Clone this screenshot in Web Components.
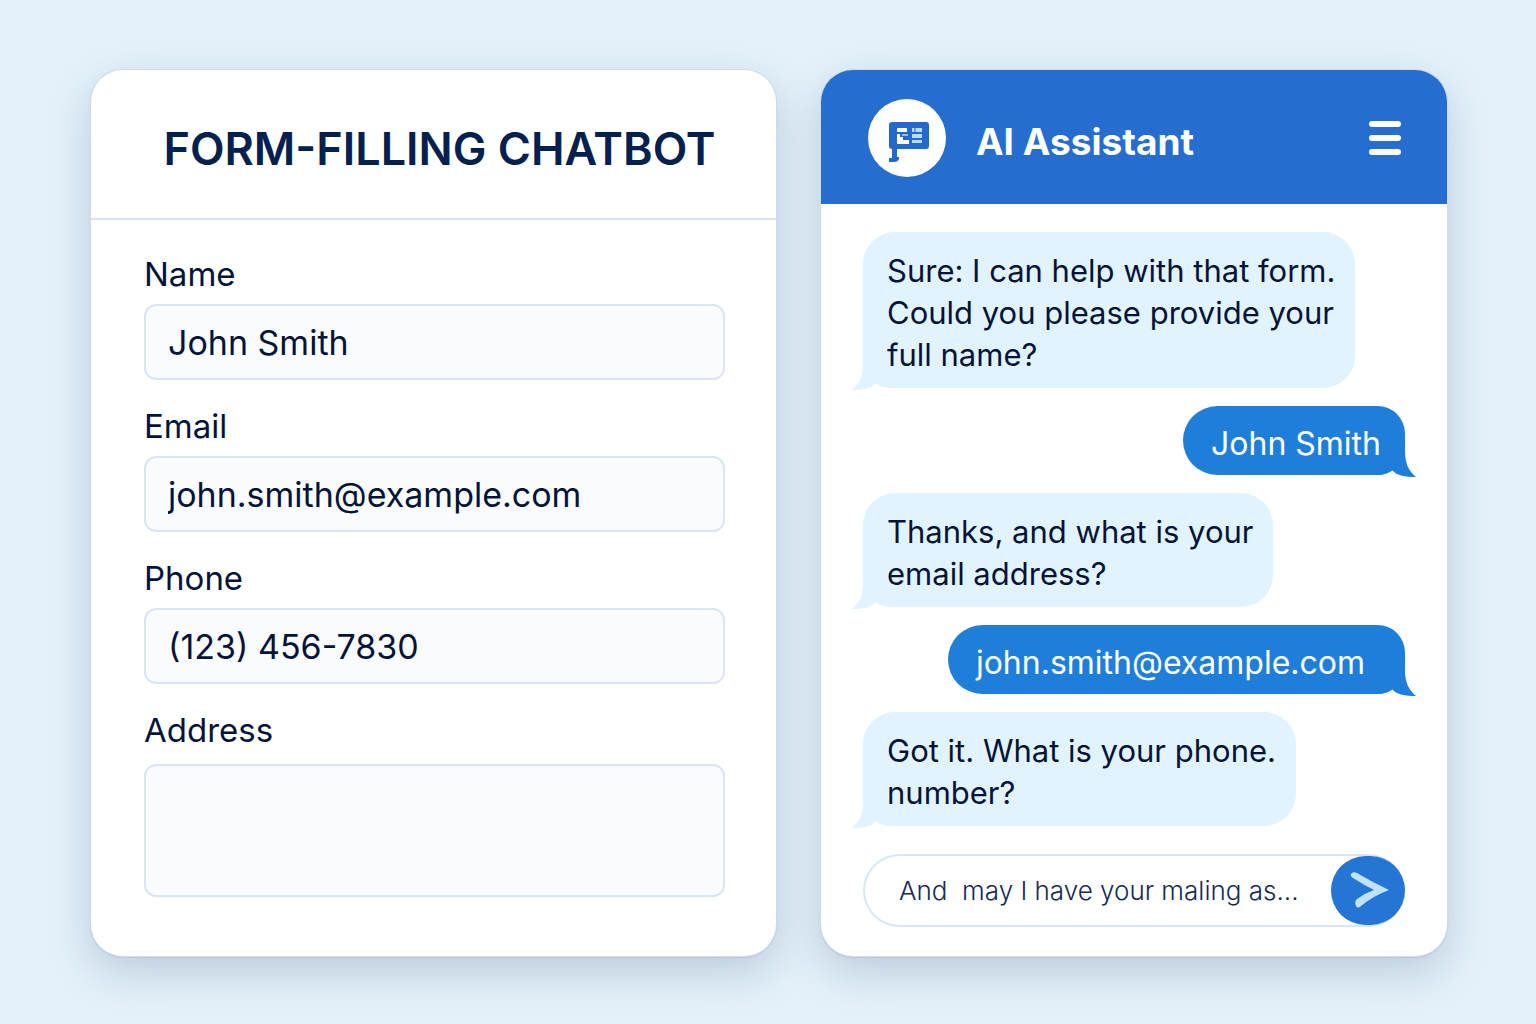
<!DOCTYPE html>
<html lang="en">
<head>
<meta charset="utf-8">
<meta name="viewport" content="width=device-width, initial-scale=1">
<title>Form-Filling Chatbot</title>
<style>
html, body { margin: 0; min-height: 100%; }
body { background: #e4f1fa; color: #051338; font-family: Inter, "Liberation Sans", sans-serif; }
</style>
</head>
<body>
<chatbot-page>
  <form-card heading="FORM-FILLING CHATBOT">
    <form-field label="Name" value="John Smith"></form-field>
    <form-field label="Email" type="email" value="john.smith@example.com"></form-field>
    <form-field label="Phone" type="tel" value="(123) 456-7830"></form-field>
    <form-field label="Address" multiline></form-field>
  </form-card>
  <chat-card heading="AI Assistant">
    <chat-message>Sure: I can help with that form.<br>Could you please provide your<br>full name?</chat-message>
    <chat-message from="user">John Smith</chat-message>
    <chat-message>Thanks, and what is your<br>email address?</chat-message>
    <chat-message from="user" roomy>john.smith@example.com</chat-message>
    <chat-message>Got it. What is your phone.<br>number?</chat-message>
    <chat-composer slot="composer" value="And  may I have your maling as..."></chat-composer>
  </chat-card>
</chatbot-page>
<script>
class BaseElement extends HTMLElement {
  connectedCallback() {
    if (!this.shadowRoot) this.attachShadow({ mode: "open" }).innerHTML = this.render();
  }
  attr(name, fallback = "") { return this.getAttribute(name) || fallback; }
}

customElements.define("chatbot-page", class extends BaseElement {
  render() {
    return `<style>
      :host { display: block; }
      main { display: flex; gap: 45px; align-items: stretch; box-sizing: border-box; min-height: 100vh; padding: 70px 89px 68px 91px; }
      ::slotted(*) { box-sizing: border-box; min-width: 0; border-radius: 32px; background: #fff;
        box-shadow: 0 0 0 1px #cddced, 0 1px 1px 1px #b9c9de, 0 16px 44px rgba(80, 105, 140, .28); }
      ::slotted(form-card) { flex: 685 1 0; }
      ::slotted(chat-card) { flex: 626 1 0; }
    </style><main><slot></slot></main>`;
  }
});

customElements.define("form-card", class extends BaseElement {
  render() {
    return `<style>
      :host { display: block; }
      header { display: flex; align-items: center; justify-content: center; box-sizing: border-box; height: 150px;
        padding: 10px 0 0 12px; border-bottom: 2px solid #dbe5f1; }
      h1 { margin: 0; font-size: 45px; line-height: 56px; font-weight: 600; color: #04204f; white-space: nowrap; }
      form { display: flex; flex-direction: column; gap: 24px; padding: 32px 51px 0 53px; }
    </style>
    <header><h1>${this.attr("heading")}</h1></header>
    <form><slot></slot></form>`;
  }
});

customElements.define("form-field", class extends BaseElement {
  render() {
    const control = this.hasAttribute("multiline")
      ? `<textarea id="control"></textarea>`
      : `<input id="control" type="${this.attr("type", "text")}" value="${this.attr("value")}">`;
    return `<style>
      :host { display: block; }
      label { display: block; margin-bottom: 8px; font-size: 33px; line-height: 44px; }
      input, textarea { display: block; box-sizing: border-box; width: 100%; height: 76px; margin: 0; padding: 0 22px;
        border: 2px solid #dbe5f2; border-radius: 12px; background: #fafbfe; color: inherit;
        font: inherit; font-size: 34px; outline: none; resize: none; }
      textarea { height: 133px; margin-top: 12px; padding: 16px 22px; }
    </style>
    <label for="control">${this.attr("label")}</label>${control}`;
  }
});

customElements.define("chat-card", class extends BaseElement {
  render() {
    return `<style>
      :host { display: flex; flex-direction: column; }
      header { display: flex; align-items: center; box-sizing: border-box; height: 134px; padding: 2px 46px 0 47px;
        border-radius: 32px 32px 0 0; background: #256dce; color: #fff; }
      .avatar { flex: none; width: 78px; height: 78px; }
      h2 { flex: 1; margin: 0 0 0 30px; padding-top: 8px; font-size: 37px; line-height: 46px; font-weight: 700; white-space: nowrap; }
      button { display: block; padding: 0; border: 0; background: none; cursor: pointer; }
      button svg { display: block; }
      .log { display: flex; flex-direction: column; gap: 18px; padding: 28px 42px; }
      .composer { padding: 0 42px 29px; }
    </style>
    <header>
      <svg class="avatar" viewBox="0 0 78 78" aria-hidden="true">
        <circle cx="39" cy="39" r="39" fill="#fff"/>
        <path d="M24 23H58Q61 23 61 26V47Q61 50 58 50H29V58H31V60Q30 63 26 63H21V59H24V50Q21 50 21 47V26Q21 23 24 23Z" fill="#246acb"/>
        <path d="M29 29H39V33H29Z" fill="#fff"/>
        <path d="M29 35H32V38H35V41H41V45H29Z" fill="#fff"/>
        <path d="M34 35H40V37H34Z" fill="#8dbcf0"/>
        <path d="M44 29H54V33H44ZM44 35H54V39H44ZM44 41H54V44H44Z" fill="#b7dcfa"/>
        <path d="M47 29V33" stroke="#246acb"/>
      </svg>
      <h2>${this.attr("heading")}</h2>
      <button type="button" aria-label="Menu">
        <svg width="32" height="34" viewBox="0 0 32 34" fill="#fff"><rect width="32" height="6" rx="3"/><rect y="14" width="32" height="6" rx="3"/><rect y="28" width="32" height="6" rx="3"/></svg>
      </button>
    </header>
    <div class="log"><slot></slot></div>
    <div class="composer"><slot name="composer"></slot></div>`;
  }
});

customElements.define("chat-message", class extends BaseElement {
  render() {
    return `<style>
      :host { display: block; position: relative; isolation: isolate; align-self: flex-start; padding: 18px 20px 12px 24px;
        border-radius: 32px 32px 32px 28px; background: #e1f3fe; font-size: 31px; line-height: 42px; white-space: nowrap; }
      :host([from="user"]) { align-self: flex-end; padding: 17px 24px 10px 28px; border-radius: 35px 28px 28px 35px;
        background: #207edb; color: #fff; font-size: 32px; }
      :host([roomy]) { padding-right: 40px; }
      .tail { position: absolute; z-index: -1; left: -11px; bottom: -2px; width: 40px; height: 32px; fill: #e1f3fe; }
      :host([from="user"]) .tail { left: auto; right: -11px; fill: #207edb; transform: scaleX(-1); }
    </style>
    <svg class="tail" viewBox="0 0 40 32" aria-hidden="true"><path d="M11 0V6C11 19 7 26 0 32C11 32 19 31 24 25Q29 30 40 30V0Z"/></svg>
    <slot></slot>`;
  }
});

customElements.define("chat-composer", class extends BaseElement {
  render() {
    return `<style>
      :host { display: block; }
      form { display: flex; align-items: center; box-sizing: border-box; height: 73px; padding-left: 34px;
        border: 2px solid #d9e6f6; border-right: 0; border-radius: 37px; background: #fff; }
      input { flex: 1; min-width: 0; padding: 0; border: 0; outline: none; background: none; color: #17294f;
        font: inherit; font-size: 26px; font-weight: 300; white-space: pre; }
      button { flex: none; width: 74px; height: 69px; padding: 0; border: 0; border-radius: 36px; background: #2475d4; cursor: pointer; }
      svg { display: block; width: 74px; height: 69px; }
    </style>
    <form>
      <input type="text" aria-label="Message" value="${this.attr("value")}">
      <button type="button" aria-label="Send"><svg viewBox="0 0 74 69"><path d="M20 18Q22 15 26 17Q41 26 58 34Q42 40 30 50Q27 53 25 50Q23 46 26 43Q34 37 43 34Q33 29 22 22Q19 20 20 18Z" fill="#bfe3ff"/></svg></button>
    </form>`;
  }
});
</script>
</body>
</html>
